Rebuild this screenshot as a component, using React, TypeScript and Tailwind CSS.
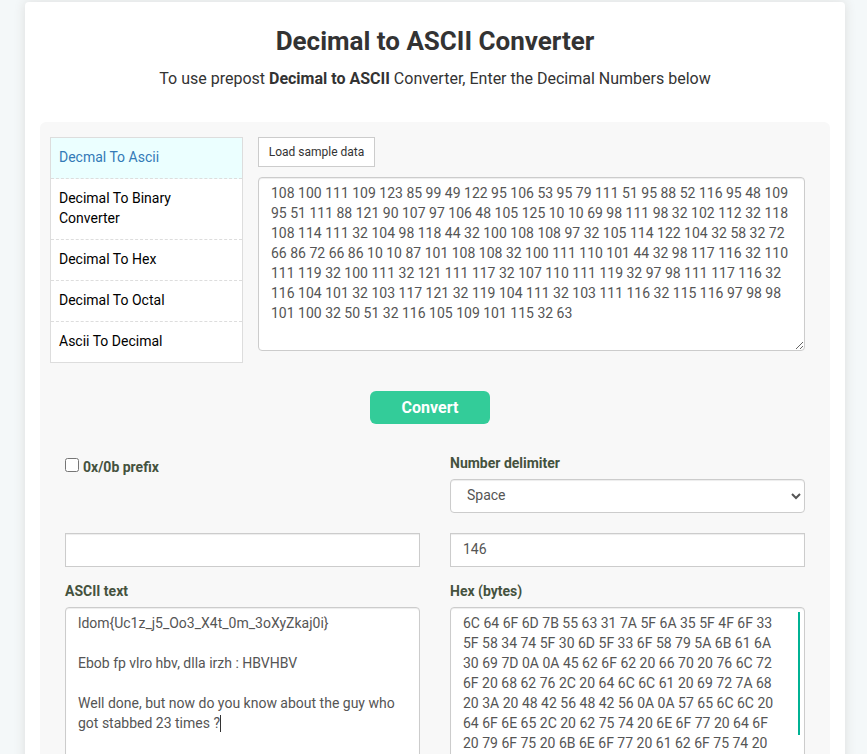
import { useState } from "react";

const links = [
  "Decmal To Ascii",
  "Decimal To Binary Converter",
  "Decimal To Hex",
  "Decimal To Octal",
  "Ascii To Decimal",
];

const sampleDecimal =
  "108 100 111 109 123 85 99 49 122 95 106 53 95 79 111 51 95 88 52 116 95 48 109 95 51 111 88 121 90 107 97 106 48 105 125 10 10 69 98 111 98 32 102 112 32 118 108 114 111 32 104 98 118 44 32 100 108 108 97 32 105 114 122 104 32 58 32 72 66 86 72 66 86 10 10 87 101 108 108 32 100 111 110 101 44 32 98 117 116 32 110 111 119 32 100 111 32 121 111 117 32 107 110 111 119 32 97 98 111 117 116 32 116 104 101 32 103 117 121 32 119 104 111 32 103 111 116 32 115 116 97 98 98 101 100 32 50 51 32 116 105 109 101 115 32 63";

const asciiText =
  "ldom{Uc1z_j5_Oo3_X4t_0m_3oXyZkaj0i}\n\nEbob fp vlro hbv, dlla irzh : HBVHBV\n\nWell done, but now do you know about the guy who got stabbed 23 times ?";

const hexText = sampleDecimal
  .split(" ")
  .map((n) => Number(n).toString(16).toUpperCase().padStart(2, "0"))
  .join(" ");

const field =
  "block w-full border border-[#cccccc] bg-white px-3 pt-[5px] pb-[7px] text-sm leading-5 text-[#555555] shadow-[inset_0_1px_1px_rgba(0,0,0,0.075)] outline-none";

export default function App() {
  const [input, setInput] = useState(sampleDecimal);

  return (
    <div className="h-screen overflow-y-auto bg-[#f4f8f9] pt-0.5 pr-[22px] pl-[25px] font-['Roboto','Liberation_Sans',sans-serif] text-sm leading-5 text-[#333333] [scrollbar-width:none]">
      <main className="rounded bg-white px-[15px] pb-4 shadow-[0_0_12px_#dddddd]">
        <header className="pt-6 pb-[31px] text-center">
          <h1 className="text-[26px] leading-[30px] font-bold">Decimal to ASCII Converter</h1>
          <p className="pt-[11px] text-base leading-6">
            To use prepost <b>Decimal to ASCII</b> Converter, Enter the Decimal Numbers below
          </p>
        </header>

        <section className="rounded-md bg-[#f8f8f8] pt-[15px] pr-[25px] pb-8 pl-2.5">
          <div className="flex items-start gap-[15px]">
            <nav className="w-[193px] shrink-0 divide-y divide-dashed divide-[#dddddd] border border-[#dddddd] bg-white">
              {links.map((label, i) => (
                <a
                  key={label}
                  href="#"
                  className={
                    i === 0
                      ? "block bg-[#ebffff] px-2 pt-[9px] pb-[11px] text-[#337ab7]"
                      : "block px-2 pt-[9px] pb-[11px] text-black"
                  }
                >
                  {label}
                </a>
              ))}
            </nav>
            <div className="min-w-0 flex-1">
              <button
                type="button"
                onClick={() => setInput(sampleDecimal)}
                className="block h-[30px] w-[117px] border border-[#cccccc] bg-white text-xs text-[#333333]"
              >
                Load sample data
              </button>
              <textarea
                aria-label="Decimal numbers"
                value={input}
                onChange={(e) => setInput(e.target.value)}
                className={`${field} mt-2.5 h-[174px] resize-y rounded`}
              />
            </div>
          </div>

          <div className="pl-[15px]">
            <div className="flex justify-center pt-7 pr-2.5">
              <button
                type="button"
                className="h-[33px] w-[120px] rounded-md bg-[#33cc99] text-base font-bold text-white"
              >
                Convert
              </button>
            </div>

            <div className="grid grid-cols-2 gap-x-[30px] pt-[29px]">
              <div className="flex items-start pt-1 font-bold text-[#45523e]">
                <input id="prefix" type="checkbox" className="mt-px h-3.5 w-3.5" />
                <label htmlFor="prefix" className="pl-1">
                  0x/0b prefix
                </label>
              </div>
              <div>
                <label htmlFor="delimiter" className="block pb-1.5 font-bold text-[#45523e]">
                  Number delimiter
                </label>
                <select id="delimiter" className={`${field} h-[34px] rounded`}>
                  <option>Space</option>
                  <option>Comma</option>
                </select>
              </div>
            </div>

            <div className="grid grid-cols-2 gap-x-[30px] pt-5">
              <input aria-label="Delimiter text" type="text" className={`${field} h-[34px]`} />
              <input
                aria-label="Number count"
                type="text"
                defaultValue="146"
                className={`${field} h-[34px]`}
              />
            </div>

            <div className="grid grid-cols-2 gap-x-[30px] pt-3.5">
              <div>
                <label htmlFor="ascii" className="block pb-1.5 font-bold text-[#45523e]">
                  ASCII text
                </label>
                <div className="relative">
                  <textarea
                    id="ascii"
                    defaultValue={asciiText}
                    className={`${field} h-[174px] resize-y rounded`}
                  />
                  <span className="absolute top-[108px] left-[155px] h-[17px] w-px bg-[#333333]" />
                </div>
              </div>
              <div>
                <label htmlFor="hex" className="block pb-1.5 font-bold text-[#45523e]">
                  Hex (bytes)
                </label>
                <div className="relative">
                  <textarea
                    id="hex"
                    defaultValue={hexText}
                    className={`${field} h-[174px] resize-y rounded pr-[22px] [scrollbar-width:none]`}
                  />
                  <span className="absolute top-[5px] right-[5px] h-[123px] w-0.5 bg-[#00b294]" />
                </div>
              </div>
            </div>
          </div>
        </section>
      </main>
    </div>
  );
}
